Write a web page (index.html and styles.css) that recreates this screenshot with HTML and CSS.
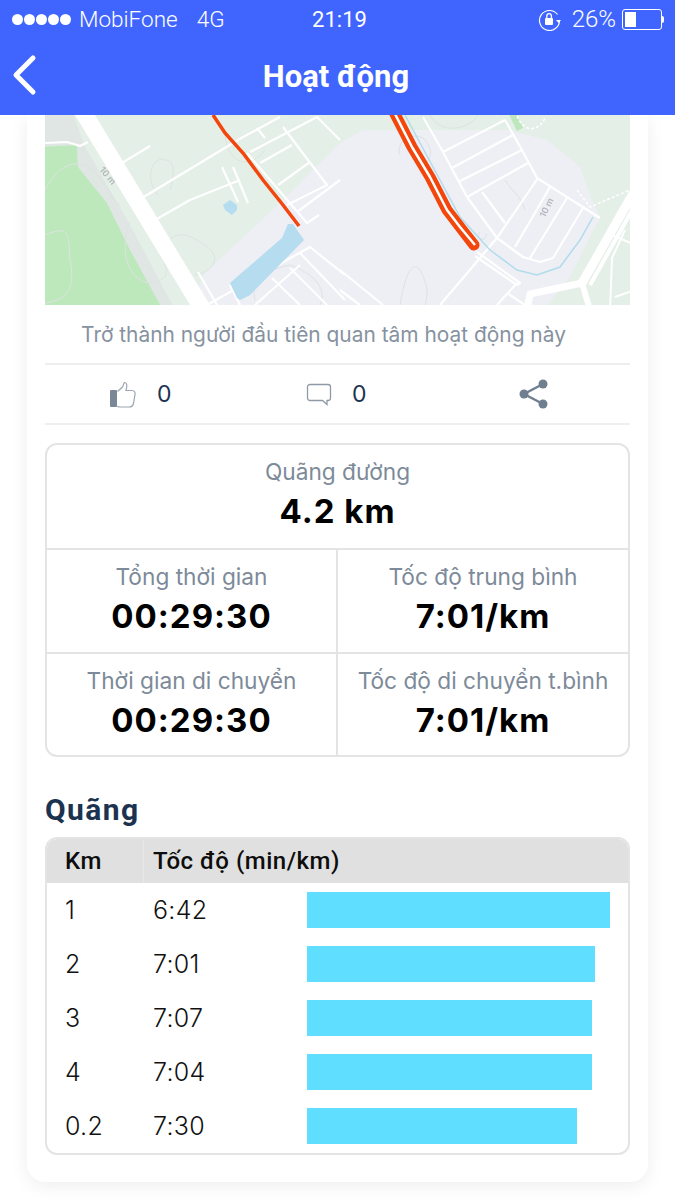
FILE: index.html
```html
<!DOCTYPE html>
<html lang="vi">
<head>
<meta charset="utf-8">
<title>Hoạt động</title>
<link rel="stylesheet" href="styles.css">
</head>
<body>
<header class="topbar">
  <div class="status">
    <div class="status-left">
      <span class="dots"><i></i><i></i><i></i><i></i><i></i></span>
      <span class="carrier">MobiFone</span>
      <span class="net">4G</span>
    </div>
    <div class="time">21:19</div>
    <div class="status-right">
      <svg class="lock" width="23" height="23" viewBox="0 0 23 23"><path d="M19.500 6.500A10 10 0 1 0 21.500 12.500" fill="none" stroke="#fff" stroke-width="1.200"/><path d="M18 12h5l-2.500 3z" fill="#fff"/><rect x="7" y="10" width="8" height="7" rx="1" fill="#fff"/><path d="M8.800 10V8a2.300 2.300 0 0 1 4.600 0v2" fill="none" stroke="#fff" stroke-width="1.300"/></svg>
      <span class="pct">26%</span>
      <span class="battery"><span class="battery-fill"></span></span>
      <span class="battery-tip"></span>
    </div>
  </div>
  <div class="navbar">
    <svg class="back" width="28" height="42" viewBox="0 0 28 42"><path d="M23 4 6 21l17 17" fill="none" stroke="#fff" stroke-width="5" stroke-linecap="round" stroke-linejoin="round"/></svg>
    <h1 class="title">Hoạt động</h1>
  </div>
</header>
<main class="page">
  <section class="card">
    <svg class="map" width="585" height="190" viewBox="45 115 585 190">
      <g class="map-art">
      <rect x="40" y="110" width="595" height="200" fill="#e4efe7"/>
      <path d="M197 310V290L205 273 283 200 340 143 363 130H507L547 140 580 167 592 200 600 217 570 277 543 310Z" fill="#eeeef5"/>
      <path d="M507 110H515L523 128 517 131Z" fill="#bde8bc"/>
      <path d="M40 110H72L84 145 130 225 175 310H160L130 250 107 203 78 167 77 145 40 147Z" fill="#dfe6e3"/>
      <path d="M40 147 77 145 78 167 107 203 130 250 163 310H40Z" fill="#bde8bc"/>
      <g fill="none" stroke="#dde3e1" stroke-width="1">
        <path d="M45 190C60 160 85 155 100 178 112 195 112 200 120 205"/>
        <path d="M45 235C70 225 68 232 70 260 75 285 70 300 45 303"/>
        <path d="M130 222C120 245 125 280 150 283 170 280 170 270 160 255 175 220 195 240 205 245 220 255 218 270 195 275"/>
        <path d="M158 195C142 175 155 155 165 160 175 160 175 175 170 190"/>
        <path d="M225 135C228 165 250 170 265 150"/>
        <path d="M255 300C250 280 265 270 290 265 305 270 330 285 320 305"/>
        <path d="M400 305C405 275 412 260 420 270 425 280 430 290 425 305"/>
        <path d="M400 155C395 140 415 130 425 140 435 150 430 165 420 165"/>
        <path d="M505 180C515 195 520 195 525 210"/>
        <path d="M480 232A4 4 0 1 0 486 234"/>
        <path d="M430 115C440 135 470 130 478 115"/>
      </g>
      <g fill="none" stroke="#fff" stroke-width="2.200" stroke-linejoin="round">
        <path d="M45 143 67 142 80 146 88 142"/>
        <path d="M122 163 150 146"/>
        <path d="M142 198 243 137 280 117"/>
        <path d="M155 220 190 200 240 180"/>
        <path d="M222 167 238 202"/>
        <path d="M233 167 248 203"/>
        <path d="M257 128 265 138"/>
        <path d="M250 152 317 117 340 140"/>
        <path d="M260 163 292 145"/>
        <path d="M283 127 327 185 287 205"/>
        <path d="M278 185 310 162"/>
        <path d="M297 212 340 180"/>
        <path d="M247 153 307 223 319 215"/>
        <path d="M207 305 310 247 345 275"/>
        <path d="M300 253 345 300"/>
        <path d="M290 268 327 305"/>
        <path d="M272 278 300 305"/>
        <path d="M198 272 217 305"/>
        <path d="M230 285 240 305"/>
        <path d="M255 305 300 265"/>
        <path d="M340 270 383 305"/>
        <path d="M340 290 360 305"/>
        <path d="M423 117 443 152 467 197 497 238 523 257 540 262 553 258 583 208"/>
        <path d="M443 152 505 120"/>
        <path d="M452 168 513 135"/>
        <path d="M458 182 522 150"/>
        <path d="M467 197 528 163"/>
        <path d="M505 120 522 150 537 178 600 218"/>
        <path d="M538 178 497 238 440 305"/>
        <path d="M550 187 515 247"/>
        <path d="M567 198 530 258"/>
        <path d="M482 192 505 223"/>
        <path d="M477 252 520 283 517 285 475 256"/>
        <path d="M497 305 517 283"/>
        <path d="M507 293 525 305"/>
      </g>
      <path d="M82 110 203 310" fill="none" stroke="#fff" stroke-width="17"/>
      <g fill="none" stroke="#fff" stroke-linejoin="round">
        <path d="M635 190 582 283" stroke-width="9"/>
        <path d="M635 205 590 285" stroke-width="4"/>
        <path d="M582 283 530 294 527 310" stroke-width="7"/>
        <path d="M582 283 590 310" stroke-width="6"/>
        <path d="M625 230 612 258 610 310" stroke-width="2"/>
        <path d="M612 235 635 245" stroke-width="2"/>
        <path d="M615 297 635 290" stroke-width="2"/>
      </g>
      <path d="M577 190 590 207 630 190" fill="none" stroke="#fff" stroke-width="1.500" stroke-dasharray="3 2"/>
      <path d="M517 116C525 135 540 130 545 118" fill="none" stroke="#fff" stroke-width="1.500" stroke-dasharray="3 2"/>
      <path d="M223 205 230 200 237 205 237 210 232 215 225 210Z" fill="#b5dcef"/>
      <path d="M230 283 238 276 282 238 288 224 293 224 304 240 250 295 240 300 237 298Z" fill="#b5dcef"/>
      <path d="M405 115 433 167 460 217 490 250 517 270 537 275 560 267 580 240 593 217" fill="none" stroke="#b1dcec" stroke-width="1.500"/>
      <path d="M213 115 225 133 243 153 263 180 283 205 299 226" fill="none" stroke="#f2460c" stroke-width="3.500"/>
      <path d="M394 112 412 147 430 177 447 210 460 227 474 245" fill="none" stroke="#f2460c" stroke-width="11" stroke-linejoin="round" stroke-linecap="round"/>
      <path d="M394 112 412 147 430 177 447 210 460 227 475 245" fill="none" stroke="#fff" stroke-width="2.500" stroke-linejoin="round"/>
      <text class="map-label" transform="translate(99 170) rotate(50)">10 m</text>
      <text class="map-label" transform="translate(545 218) rotate(-64)">10 m</text>
      </g>
    </svg>
    <p class="caption">Trở thành người đầu tiên quan tâm hoạt động này</p>
    <div class="actions">
      <div class="action action-like">
        <svg width="28" height="27" viewBox="0 0 28 27"><rect x="1" y="9" width="7" height="17" rx="1" fill="#7a8796"/><path d="M8.500 10.500 13.500 6c1-1.500 1-4 2-4.500 2.500 0 3 3 1.500 8h6c2.500 0 3.500 2 3 4l-1.500 9c-.5 2-2 3.500-4 3.500H11c-1.500 0-2.500-.5-2.500-1" fill="none" stroke="#9aa5b0" stroke-width="1.200"/></svg>
        <span class="count">0</span>
      </div>
      <div class="action action-comment">
        <svg width="26" height="23" viewBox="0 0 26 23"><path d="M4 1.500h18a2.500 2.500 0 0 1 2.500 2.500v11a2.500 2.500 0 0 1-2.500 2.500h-1V21.500L16.500 17.500H4A2.500 2.500 0 0 1 1.500 15V4A2.500 2.500 0 0 1 4 1.500Z" fill="none" stroke="#8f9aa6" stroke-width="1.300"/></svg>
        <span class="count">0</span>
      </div>
      <div class="action action-share">
        <svg width="30" height="30" viewBox="0 0 30 30"><path d="M24 5 5 15l19 10" fill="none" stroke="#6f7f90" stroke-width="2.400"/><circle cx="24" cy="5" r="4.500" fill="#6f7f90"/><circle cx="5" cy="15" r="4.500" fill="#6f7f90"/><circle cx="24" cy="25" r="4.500" fill="#6f7f90"/></svg>
      </div>
    </div>
    <div class="stats">
      <div class="stat stat-wide"><div class="label">Quãng đường</div><div class="value">4.2 km</div></div>
      <div class="stat"><div class="label">Tổng thời gian</div><div class="value">00:29:30</div></div>
      <div class="stat"><div class="label">Tốc độ trung bình</div><div class="value">7:01/km</div></div>
      <div class="stat"><div class="label">Thời gian di chuyển</div><div class="value">00:29:30</div></div>
      <div class="stat"><div class="label">Tốc độ di chuyển t.bình</div><div class="value">7:01/km</div></div>
    </div>
    <h2 class="section">Quãng</h2>
    <div class="table">
      <div class="thead"><div class="th th-km">Km</div><div class="th">Tốc độ (min/km)</div></div>
      <div class="row"><span>1</span><span>6:42</span><div class="bar" style="width:303px"></div></div>
      <div class="row"><span>2</span><span>7:01</span><div class="bar" style="width:288px"></div></div>
      <div class="row"><span>3</span><span>7:07</span><div class="bar" style="width:285px"></div></div>
      <div class="row"><span>4</span><span>7:04</span><div class="bar" style="width:285px"></div></div>
      <div class="row"><span>0.2</span><span>7:30</span><div class="bar" style="width:270px"></div></div>
    </div>
  </section>
</main>
</body>
</html>
```
FILE: styles.css
```css
* { box-sizing: border-box; }
html, body { margin: 0; padding: 0; }
body { width: 675px; height: 1200px; overflow: hidden; background: #fff; font-family: "Inter", "Liberation Sans", sans-serif; position: relative; }
.topbar { background: #4065ff; height: 115px; color: #fff; position: relative; z-index: 2; }
.status { height: 38px; display: flex; align-items: center; font-family: "Roboto", sans-serif; font-weight: 300; font-size: 22.500px; padding: 0 11px 0 12px; }
.status-left, .status-right { flex: 1; display: flex; align-items: center; }
.status-right { justify-content: flex-end; }
.dots { display: flex; gap: 1px; margin-right: 8px; }
.dots i { width: 11px; height: 11px; border-radius: 50%; background: #fff; display: block; }
.net { margin-left: 19px; }
.time { font-weight: 400; font-size: 22px; margin-left: 3px; }
.lock { margin-right: 11px; }
.pct { margin-right: 6px; font-size: 24px; }
.battery { width: 40px; height: 21px; border: 1px solid #fff; border-radius: 3px; padding: 2px; display: block; }
.battery-fill { display: block; width: 11px; height: 100%; background: #fff; }
.battery-tip { width: 2px; height: 7px; background: #fff; border-radius: 0 2px 2px 0; }
.navbar { height: 77px; display: flex; align-items: center; justify-content: center; position: relative; }
.back { position: absolute; left: 10px; top: 16px; }
.title { margin: 0 3px 0 0; font-family: "Roboto", sans-serif; font-weight: 700; font-size: 31px; color: #fff; }
.page { padding: 0 27px; }
.card { background: #fff; border-radius: 0 0 18px 18px; padding: 0 18px 27px; box-shadow: 0 4px 18px rgba(0,0,0,.07); height: 1067px; }
.map { display: block; }
.map-art { filter: blur(.45px); }
.map-label { font-family: "Inter", sans-serif; font-size: 9px; font-weight: 600; fill: #b3b6ba; }
.caption { margin: 0; height: 60px; border-bottom: 2px solid #eeeeee; display: flex; align-items: center; justify-content: center; padding-right: 28px; font-size: 20.900px; color: #8692a0; }
.actions { height: 60px; border-bottom: 2px solid #eeeeee; display: grid; grid-template-columns: 195px 195px 1fr; align-items: center; }
.action { display: flex; align-items: center; }
.action-like { padding-left: 64px; gap: 20px; }
.action-comment { padding-left: 66px; gap: 20px; }
.action-share { padding-left: 84px; }
.count { font-size: 23px; color: #1c3350; }
.stats { margin-top: 18px; border: 2px solid #e4e4e4; border-radius: 12px; display: grid; grid-template-columns: 291px 1fr; grid-template-rows: 105px 104px 101px; }
.stat { display: flex; flex-direction: column; align-items: center; padding-top: 12px; gap: 3px; border-bottom: 2px solid #e4e4e4; }
.stat:nth-child(even) { border-right: 2px solid #e4e4e4; }
.stat:nth-child(n+4) { border-bottom: 0; }
.stat-wide { grid-column: 1 / -1; border-right: 0; }
.label { font-size: 22.700px; line-height: 30px; color: #7d8a99; }
.value { font-size: 33px; line-height: 42px; font-weight: 700; color: #000; letter-spacing: 1px; }
.section { margin: 36px 0 10px; font-family: "Roboto", sans-serif; font-size: 30px; line-height: 34px; font-weight: 700; color: #1c3350; letter-spacing: 1.400px; }
.table { height: 318px; border: 2px solid #e4e4e4; border-radius: 12px; overflow: hidden; }
.thead { height: 44px; background: #e0e0e0; display: flex; align-items: center; font-family: "Roboto", sans-serif; font-weight: 500; font-size: 24px; letter-spacing: .5px; color: #0d0d0d; }
.th { padding-left: 9px; }
.th-km { width: 97px; padding-left: 18px; border-right: 1px solid #e8e8e8; height: 100%; display: flex; align-items: center; }
.row { height: 54px; display: grid; grid-template-columns: 88px 154px 1fr; align-items: center; padding-left: 18px; font-family: "Inter", sans-serif; font-weight: 300; font-size: 25px; letter-spacing: .3px; color: #111; }
.bar { height: 36px; background: #5fdeff; }
```
